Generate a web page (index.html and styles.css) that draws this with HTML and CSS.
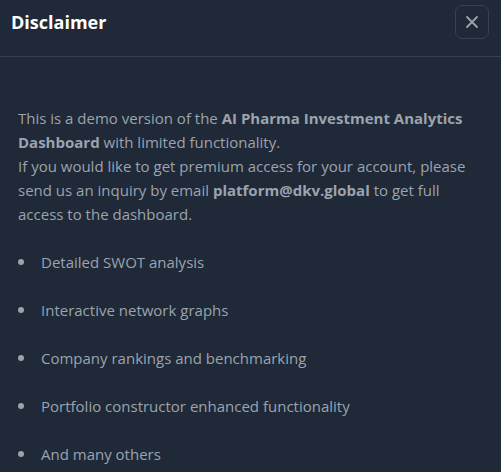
FILE: index.html
```html
<!DOCTYPE html>
<html lang="en">
<head>
<meta charset="utf-8">
<title>Disclaimer</title>
<link rel="stylesheet" href="styles.css">
</head>
<body>
<div class="modal">
  <div class="modal-header">
    <h2 class="modal-title">Disclaimer</h2>
    <button class="close-btn" aria-label="Close">
      <svg width="14" height="14" viewBox="0 0 14 14" fill="none" stroke="currentColor" stroke-width="1.8" stroke-linecap="round"><path d="M2 2L12 12M12 2L2 12"/></svg>
    </button>
  </div>
  <div class="modal-body">
    <p class="intro">This is a demo version of the <b>AI Pharma Investment Analytics Dashboard</b> with limited functionality.<br>If you would like to get premium access for your account, please send us an inquiry by email <b>platform@dkv.global</b> to get full access to the dashboard.</p>
    <ul class="features">
      <li>Detailed SWOT analysis</li>
      <li>Interactive network graphs</li>
      <li>Company rankings and benchmarking</li>
      <li>Portfolio constructor enhanced functionality</li>
      <li>And many others</li>
    </ul>
  </div>
</div>
</body>
</html>
```

FILE: styles.css
```css
html, body {
  margin: 0;
  padding: 0;
  background: #1f2937;
}
body {
  font-family: "Open Sans", "Noto Sans", sans-serif;
  color: #9ca3af;
  width: 501px;
  height: 472px;
  overflow: hidden;
}
.modal-header {
  display: flex;
  align-items: flex-start;
  justify-content: space-between;
  height: 56px;
  border-bottom: 1px solid #374151;
  padding: 0 12px 0 11px;
}
.modal-title {
  margin: 0;
  padding-top: 10px;
  font-size: 18px;
  line-height: 24px;
  font-weight: 700;
  color: #ffffff;
}
.close-btn {
  margin-top: 5px;
  width: 34px;
  height: 34px;
  border: 1px solid #374151;
  border-radius: 7px;
  background: transparent;
  color: #9ca3af;
  display: flex;
  align-items: center;
  justify-content: center;
  padding: 0;
}
.modal-body {
  padding: 49px 18px 0 18px;
  font-size: 15px;
  line-height: 24px;
}
.intro {
  margin: 0;
}
.intro b {
  font-weight: 700;
}
.features {
  list-style: none;
  margin: 24px 0 0 0;
  padding: 0;
  display: flex;
  flex-direction: column;
  gap: 24px;
}
.features li {
  display: flex;
  align-items: center;
  gap: 17px;
}
.features li::before {
  content: "";
  flex: 0 0 6px;
  width: 6px;
  height: 6px;
  border-radius: 50%;
  background: #9ca3af;
}
```
